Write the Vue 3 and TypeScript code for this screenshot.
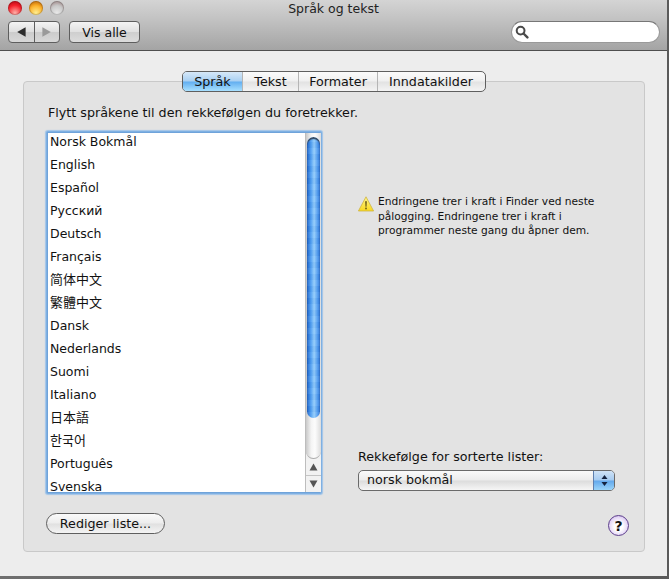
<script setup lang="ts">
const languages: string[] = [
  'Norsk Bokmål', 'English', 'Español', 'Русский', 'Deutsch', 'Français', '简体中文', '繁體中文',
  'Dansk', 'Nederlands', 'Suomi', 'Italiano', '日本語', '한국어', 'Português', 'Svenska',
]
const tabs: string[] = ['Språk', 'Tekst', 'Formater', 'Inndatakilder']
const isCjk = (s: string): boolean => /[\u3000-\u9fff\uac00-\ud7af]/.test(s)
</script>

<template>
  <div class="desktop">
    <div class="window">
      <header class="titlebar">
        <div class="title-row">
          <div class="lights">
            <span class="light red"></span>
            <span class="light orange"></span>
            <span class="light grey"></span>
          </div>
          <span class="title">Språk og tekst</span>
        </div>
        <div class="tools">
          <div class="nav">
            <button class="nav-btn">
              <svg width="9" height="10" viewBox="0 0 9 10"><path d="M0.2 5 L8.6 0.3 V9.7 Z" fill="#2c2c2c" /></svg>
            </button>
            <button class="nav-btn">
              <svg width="9" height="10" viewBox="0 0 9 10"><path d="M8.8 5 L0.4 0.3 V9.7 Z" fill="#9a9a9a" /></svg>
            </button>
          </div>
          <button class="show-all">Vis alle</button>
          <div class="search">
            <svg width="14" height="14" viewBox="0 0 14 14">
              <circle cx="5.6" cy="5.6" r="3.9" fill="none" stroke="#4a4a4a" stroke-width="2" />
              <path d="M8.5 8.5 L12.4 12.4" stroke="#4a4a4a" stroke-width="2.4" stroke-linecap="round" />
            </svg>
          </div>
        </div>
      </header>

      <main class="content">
        <section class="panel">
          <nav class="tabs">
            <button v-for="(tab, i) in tabs" :key="tab" class="tab" :class="['tab-' + i, { active: i === 0 }]">{{ tab }}</button>
          </nav>
          <div class="columns">
            <div class="left">
              <p class="intro">Flytt språkene til den rekkefølgen du foretrekker.</p>
              <div class="list-box">
                <ul class="list">
                  <li v-for="lang in languages" :key="lang" :class="{ cjk: isCjk(lang) }">{{ lang }}</li>
                </ul>
                <div class="scrollbar">
                  <div class="track">
                    <div class="thumb"></div>
                  </div>
                  <div class="arrow up">
                    <svg width="9" height="8" viewBox="0 0 9 8"><path d="M4.5 0.5 L8.5 7.5 H0.5 Z" fill="#555" /></svg>
                  </div>
                  <div class="arrow">
                    <svg width="9" height="8" viewBox="0 0 9 8"><path d="M4.5 7.5 L8.5 0.5 H0.5 Z" fill="#555" /></svg>
                  </div>
                </div>
              </div>
              <button class="edit">Rediger liste...</button>
            </div>
            <div class="right">
              <div class="notice">
                <svg class="warn" width="16" height="16" viewBox="0 0 16 16">
                  <defs>
                    <linearGradient id="warnFill" x1="0" y1="0" x2="0" y2="1">
                      <stop offset="0" stop-color="#fff68a" />
                      <stop offset="1" stop-color="#f9d81e" />
                    </linearGradient>
                  </defs>
                  <path d="M8 0.8 L15.6 15 H0.4 Z" fill="url(#warnFill)" stroke="#cdb445" stroke-width="0.8" stroke-linejoin="round" />
                  <path d="M7.1 5.2 H8.9 L8.5 10.8 H7.5 Z" fill="#6b5a14" />
                  <rect x="7.2" y="11.6" width="1.6" height="1.7" fill="#6b5a14" />
                </svg>
                <p>Endringene trer i kraft i Finder ved neste pålogging. Endringene trer i kraft i programmer neste gang du åpner dem.</p>
              </div>
              <div class="spacer"></div>
              <label class="sort-label">Rekkefølge for sorterte lister:</label>
              <div class="select">
                <span class="select-value">norsk bokmål</span>
                <span class="select-arrows">
                  <svg width="7" height="13" viewBox="0 0 7 13">
                    <path d="M3.5 1 L6.5 5 H0.5 Z M3.5 12 L6.5 8 H0.5 Z" fill="#14233f" />
                  </svg>
                </span>
              </div>
              <div class="help-row">
                <button class="help">?</button>
              </div>
            </div>
          </div>
        </section>
      </main>
    </div>
  </div>
</template>

<style>
html, body { margin: 0; height: 100%; overflow: hidden; }
</style>

<style scoped>
.desktop {
  width: 669px;
  height: 579px;
  overflow: hidden;
  background: linear-gradient(90deg, #6f6f6f, #5a5a5a);
  font-family: "DejaVu Sans", "Noto Sans CJK SC", sans-serif;
  font-size: 12.5px;
  color: #111;
}
.window {
  width: 667px;
  height: 576px;
  display: flex;
  flex-direction: column;
  background: #ededed;
}
button { font: inherit; color: inherit; padding: 0; }
.titlebar {
  height: 50px;
  flex: none;
  background: linear-gradient(#d4d4d4, #c4c4c4 35%, #a4a4a4);
  border-bottom: 1px solid #4f4f4f;
  display: flex;
  flex-direction: column;
}
.title-row { height: 21px; position: relative; display: flex; justify-content: center; }
.lights { position: absolute; left: 8px; top: 1px; display: flex; gap: 7px; }
.light { width: 14px; height: 14px; border-radius: 50%; box-shadow: inset 0 0 0 1px rgba(0,0,0,.18), inset 0 3px 2px rgba(120,0,0,.12); }
.red { background: radial-gradient(circle at 50% 85%, #ffb0a8, #f5222c 55%, #c00a18); }
.orange { background: radial-gradient(circle at 50% 85%, #ffee90, #fbae26 55%, #c87a0c); }
.grey { background: radial-gradient(circle at 50% 85%, #e8e8e8, #c4c4c4 60%, #a6a6a6); }
.title { line-height: 17px; color: #222; }
.tools { display: flex; align-items: flex-start; padding-left: 8px; }
.nav {
  width: 52px;
  height: 22px;
  box-sizing: border-box;
  display: flex;
  border: 1px solid #5e5e5e;
  border-radius: 4px;
  overflow: hidden;
  background: linear-gradient(#f4f4f4, #dedede 50%, #cccccc 52%, #d8d8d8);
}
.nav-btn { flex: 1; border: 0; background: none; display: flex; align-items: center; justify-content: center; }
.nav-btn + .nav-btn { border-left: 1px solid #5e5e5e; }
.show-all {
  width: 71px;
  height: 22px;
  margin-left: 9px;
  border: 1px solid #5e5e5e;
  border-radius: 4px;
  background: linear-gradient(#f4f4f4, #e0e0e0 50%, #cfcfcf 52%, #dcdcdc);
  line-height: 19px;
}
.search {
  width: 149px;
  height: 22px;
  box-sizing: border-box;
  margin-left: auto;
  margin-right: 7px;
  background: #fff;
  border: 1px solid #9a9a9a;
  border-top-color: #777;
  border-radius: 11px;
  padding: 3px 0 0 3px;
}
.content { flex: 1; padding: 30px 22px 24px 23px; display: flex; }
.panel {
  flex: 1;
  background: #e3e3e3;
  border: 1px solid #c9c9c9;
  border-radius: 4px;
  display: flex;
  flex-direction: column;
}
.tabs {
  align-self: flex-start;
  margin: -11px 0 0 158px;
  display: flex;
  height: 19px;
  border: 1px solid #5f5f5f;
  border-radius: 5px;
  overflow: hidden;
  background: linear-gradient(#fbfbfb, #f0f0f0 48%, #e2e2e2 52%, #f4f4f4);
}
.tab { border: 0; background: none; line-height: 18px; text-align: center; font-size: 12.7px; }
.tab + .tab { border-left: 1px solid #b5b5b5; }
.tab-0 { width: 59px; }
.tab-1 { width: 56px; }
.tab-2 { width: 79px; }
.tab-3 { width: 108px; padding-right: 1px; }
.tab.active { background: linear-gradient(#d6e8f8, #a9d0f2 48%, #62aef0 52%, #a8e0ff); }
.columns { flex: 1; display: flex; }
.left { width: 311px; flex: none; display: flex; flex-direction: column; padding-left: 21px; box-sizing: border-box; }
.intro { margin: 11px 0 0 3px; line-height: 19px; white-space: nowrap; font-size: 12.7px; }
.list-box {
  width: 274px;
  height: 361px;
  box-sizing: border-box;
  margin: 10px 0 0 2px;
  background: #fff;
  border: 1px solid #6fa3da;
  border-right: 0;
  box-shadow: 0 0 0 1px #7fb0e2, 0 0 1px 2px #a0c4e8;
  border-radius: 1px;
  display: flex;
  overflow: hidden;
  flex: none;
}
.list { flex: 1; list-style: none; margin: 0; padding: 0 0 0 2px; overflow: hidden; }
.list li { height: 23px; line-height: 17px; white-space: nowrap; }
.list li.cjk { font-size: 13px; }
.scrollbar { width: 15px; flex: none; display: flex; flex-direction: column; border-left: 1px solid #bdbdbd; background: #f0f0f0; }
.track {
  flex: 1;
  background: linear-gradient(90deg, #c9c9c9, #f4f4f4 35%, #fcfcfc 60%, #dcdcdc);
  border-radius: 0 0 8px 8px;
  padding-top: 4px;
  border-bottom: 1px solid #aaa;
}
.thumb {
  width: 13px;
  margin-left: 1px;
  height: 281px;
  border-radius: 7px;
  background:
    repeating-linear-gradient(0deg, rgba(255,255,255,.05) 0 6px, rgba(0,40,120,.03) 6px 12px),
    linear-gradient(90deg, #1c62c8, #4f9ff2 30%, #93ccfb 55%, #559ff0 80%, #2a72d4);
  box-shadow: inset 0 2px 1px #34485f;
}
.arrow { height: 16px; flex: none; display: flex; align-items: center; justify-content: center; background: #f2f2f2; }
.arrow.up { border-bottom: 1px solid #c4c4c4; }
.edit {
  width: 119px;
  height: 21px;
  margin: 20px 0 0 1px;
  border: 1px solid #5f5f5f;
  border-radius: 11px;
  background: linear-gradient(#fafafa, #ededed 48%, #e0e0e0 52%, #f4f4f4);
  line-height: 18px;
  flex: none;
  font-size: 12.7px;
}
.right { flex: 1; display: flex; flex-direction: column; padding: 0 29px 0 23px; }
.notice { display: flex; align-items: flex-start; margin-top: 103px; gap: 4px; }
.warn { flex: none; margin: 1px 0 0 0; }
.notice p { margin: 0; font-size: 10.65px; line-height: 14.5px; width: 224px; }
.spacer { flex: 1; }
.sort-label { line-height: 17px; font-size: 12.7px; }
.select {
  height: 21px;
  box-sizing: border-box;
  margin-top: 5px;
  border: 1px solid #6a6a6a;
  border-radius: 5px;
  display: flex;
  overflow: hidden;
  background: linear-gradient(#fafafa, #ececec 48%, #dcdcdc 52%, #f6f6f6);
  font-size: 12.7px;
}
.select-value { flex: 1; padding-left: 8px; line-height: 18px; }
.select-arrows {
  width: 20px;
  display: flex;
  align-items: center;
  justify-content: center;
  border-left: 1px solid #5e7fae;
  background: linear-gradient(#cfe2f6, #a6cbf0 48%, #62a8ec 52%, #9ad4fa);
}
.help-row { display: flex; justify-content: flex-end; margin: 24px -14px 15px 0; }
.help {
  width: 21px;
  height: 21px;
  border-radius: 50%;
  border: 1px solid #5d3f8c;
  background: radial-gradient(circle at 50% 55%, #ffffff 30%, #e4d6f6 65%, #a98ad2);
  font-weight: 700;
  font-size: 14px;
  line-height: 18px;
  color: #111;
}
</style>
